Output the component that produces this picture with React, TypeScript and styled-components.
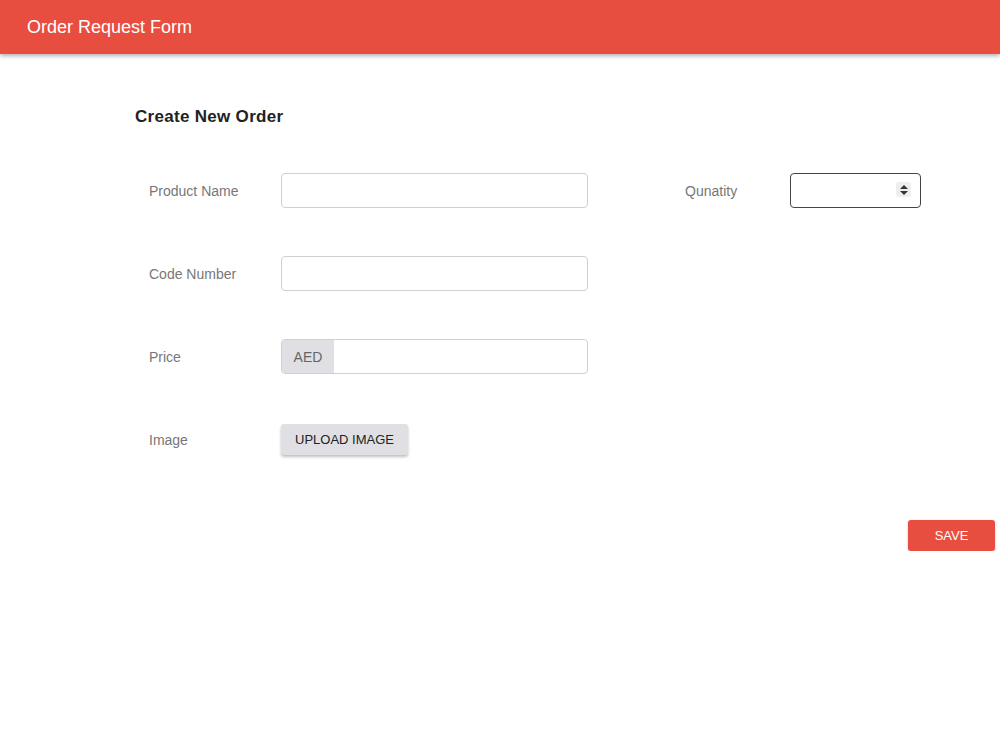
import React from "react";
import styled, { createGlobalStyle } from "styled-components";

const Global = createGlobalStyle`
  body { margin: 0; font-family: "Liberation Sans", Arial, sans-serif; background: #fff; }
`;
const Header = styled.header`
  height: 54px; background: #e84e3f; display: flex; align-items: center;
  box-shadow: 0 2px 4px rgba(0,0,0,0.3); color: #fff; position: relative;
`;
const Back = styled.span`
  position: absolute; left: -7px; top: 13px; font-size: 22px; color: #fff; line-height: 1;
`;
const Title = styled.h1`
  margin: 0 0 0 27px; font-size: 18px; font-weight: 400;
`;
const Main = styled.main`
  padding: 53px 0 0 135px; position: relative;
`;
const Heading = styled.h2`
  margin: 0 0 46px; font-size: 17px; font-weight: 700; color: #222; letter-spacing: 0.3px;
`;
const Cols = styled.div`
  display: flex; padding-left: 14px;
`;
const Col = styled.div<{ $ml?: number }>`
  display: flex; flex-direction: column; gap: 48px; margin-left: ${p => p.$ml ?? 0}px;
`;
const Row = styled.div<{ $lw: number }>`
  display: flex; align-items: center; height: 35px;
  & > label { width: ${p => p.$lw}px; font-size: 14px; color: #777; }
`;
const Input = styled.input<{ $w: number; $dark?: boolean }>`
  box-sizing: border-box; width: ${p => p.$w}px; height: 35px; border-radius: 4px;
  border: 1px solid ${p => (p.$dark ? "#444" : "#d0d0d0")}; background: #fff; outline: none;
`;
const Group = styled.div`
  display: flex; box-sizing: border-box; width: 307px; height: 35px;
  border: 1px solid #d0d0d0; border-radius: 4px; overflow: hidden;
`;
const Addon = styled.span`
  background: #e0e0e4; color: #666; font-size: 14px; width: 52px;
  display: flex; align-items: center; justify-content: center;
`;
const Spin = styled.span`
  position: absolute; right: 10px; top: 9px; width: 15px; height: 15px;
  background: #eee; border-radius: 3px; display: flex; align-items: center; justify-content: center;
`;
const QWrap = styled.div` position: relative; `;
const UploadBtn = styled.button`
  height: 31px; padding: 0 14px; background: #e0e0e4; border: none; border-radius: 3px;
  font-size: 13px; color: #222; box-shadow: 0 2px 3px rgba(0,0,0,0.25); font-family: inherit;
`;
const SaveRow = styled.div`
  display: flex; justify-content: flex-end; padding: 63px 5px 0 0;
`;
const SaveBtn = styled.button`
  width: 87px; height: 31px; background: #e84e3f; color: #fff; border: none; border-radius: 3px;
  font-size: 13px; font-family: inherit; box-shadow: 0 1px 3px rgba(0,0,0,0.2);
`;

export default function App() {
  return (
    <>
      <Global />
      <Header>
        <Back>‹</Back>
        <Title>Order Request Form</Title>
      </Header>
      <Main>
        <Heading>Create New Order</Heading>
        <Cols>
          <Col>
            <Row $lw={132}><label>Product Name</label><Input $w={307} /></Row>
            <Row $lw={132}><label>Code Number</label><Input $w={307} /></Row>
            <Row $lw={132}><label>Price</label><Group><Addon>AED</Addon></Group></Row>
            <Row $lw={132}><label>Image</label><UploadBtn>UPLOAD IMAGE</UploadBtn></Row>
          </Col>
          <Col $ml={97}>
            <Row $lw={105}><label>Qunatity</label>
              <QWrap>
                <Input $w={131} $dark />
                <Spin>
                  <svg width="8" height="10" viewBox="0 0 8 10"><path d="M4 0L8 4H0Z M4 10L0 6H8Z" fill="#333" /></svg>
                </Spin>
              </QWrap>
            </Row>
          </Col>
        </Cols>
        <SaveRow><SaveBtn>SAVE</SaveBtn></SaveRow>
      </Main>
    </>
  );
}
